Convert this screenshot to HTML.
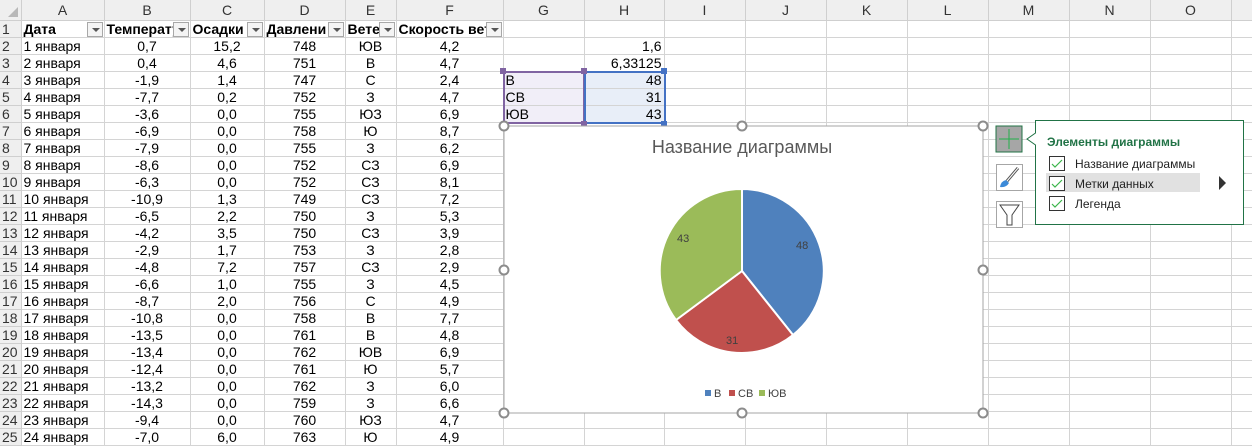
<!DOCTYPE html>
<html><head><meta charset="utf-8"><style>
*{margin:0;padding:0;box-sizing:border-box}
body{width:1252px;height:437px;overflow:hidden;background:#fff;font-family:"Liberation Sans",Arial,sans-serif;font-size:14px;color:#000;position:relative}
table{border-collapse:collapse;table-layout:fixed;position:absolute;left:0;top:0;width:1252px}
td{height:17px;border-right:1px solid #d4d4d4;border-bottom:1px solid #d4d4d4;padding:0 2px;white-space:nowrap;overflow:hidden;line-height:16px}
tr.h td{height:20px;background:#efefef;color:#333;text-align:center;border-color:#cfcfcf;font-size:14px}
td.rh{background:#efefef;color:#333;text-align:left;padding-left:2px;border-color:#cfcfcf}
td.c{text-align:center}
td.r{text-align:right}
tr.hd td{font-weight:bold;position:relative}
.dd{position:absolute;right:1px;top:1px;width:16px;height:15px;border:1px solid #a8a8a8;background:#f4f4f4}
.dd:after{content:"";position:absolute;left:4px;top:5px;border-left:4px solid transparent;border-right:4px solid transparent;border-top:4px solid #555}
.abs{position:absolute}
</style></head><body>
<table>
<colgroup><col style="width:21px"><col style="width:83px"><col style="width:86px"><col style="width:74px"><col style="width:81px"><col style="width:51px"><col style="width:107px"><col style="width:81px"><col style="width:80px"><col style="width:81px"><col style="width:81px"><col style="width:81px"><col style="width:81px"><col style="width:81px"><col style="width:81px"><col style="width:81px"><col style="width:21px"></colgroup>
<tr class="h"><td style="background:#efefef"></td><td>A</td><td>B</td><td>C</td><td>D</td><td>E</td><td>F</td><td>G</td><td>H</td><td>I</td><td>J</td><td>K</td><td>L</td><td>M</td><td>N</td><td>O</td><td></td></tr>
<tr class="hd"><td class="rh" style="font-weight:normal">1</td><td>Дата<span class="dd"></span></td><td>Температу<span class="dd"></span></td><td class="r" style="padding-right:20px">Осадки<span class="dd"></span></td><td>Давлени<span class="dd"></span></td><td class="r" style="padding-right:18px">Ветер<span class="dd"></span></td><td>Скорость вет<span class="dd"></span></td><td></td><td></td><td></td><td></td><td></td><td></td><td></td><td></td><td></td><td></td></tr>
<tr><td class="rh">2</td><td>1 января</td><td class="c">0,7</td><td class="c">15,2</td><td class="c">748</td><td class="c">ЮВ</td><td class="c">4,2</td><td></td><td class="r">1,6</td><td></td><td></td><td></td><td></td><td></td><td></td><td></td><td></td></tr>
<tr><td class="rh">3</td><td>2 января</td><td class="c">0,4</td><td class="c">4,6</td><td class="c">751</td><td class="c">В</td><td class="c">4,7</td><td></td><td class="r">6,33125</td><td></td><td></td><td></td><td></td><td></td><td></td><td></td><td></td></tr>
<tr><td class="rh">4</td><td>3 января</td><td class="c">-1,9</td><td class="c">1,4</td><td class="c">747</td><td class="c">С</td><td class="c">2,4</td><td style="background:#f1eef8">В</td><td class="r" style="background:#e8eef8">48</td><td></td><td></td><td></td><td></td><td></td><td></td><td></td><td></td></tr>
<tr><td class="rh">5</td><td>4 января</td><td class="c">-7,7</td><td class="c">0,2</td><td class="c">752</td><td class="c">З</td><td class="c">4,7</td><td style="background:#f1eef8">СВ</td><td class="r" style="background:#e8eef8">31</td><td></td><td></td><td></td><td></td><td></td><td></td><td></td><td></td></tr>
<tr><td class="rh">6</td><td>5 января</td><td class="c">-3,6</td><td class="c">0,0</td><td class="c">755</td><td class="c">ЮЗ</td><td class="c">6,9</td><td style="background:#f1eef8">ЮВ</td><td class="r" style="background:#e8eef8">43</td><td></td><td></td><td></td><td></td><td></td><td></td><td></td><td></td></tr>
<tr><td class="rh">7</td><td>6 января</td><td class="c">-6,9</td><td class="c">0,0</td><td class="c">758</td><td class="c">Ю</td><td class="c">8,7</td><td></td><td></td><td></td><td></td><td></td><td></td><td></td><td></td><td></td><td></td></tr>
<tr><td class="rh">8</td><td>7 января</td><td class="c">-7,9</td><td class="c">0,0</td><td class="c">755</td><td class="c">З</td><td class="c">6,2</td><td></td><td></td><td></td><td></td><td></td><td></td><td></td><td></td><td></td><td></td></tr>
<tr><td class="rh">9</td><td>8 января</td><td class="c">-8,6</td><td class="c">0,0</td><td class="c">752</td><td class="c">СЗ</td><td class="c">6,9</td><td></td><td></td><td></td><td></td><td></td><td></td><td></td><td></td><td></td><td></td></tr>
<tr><td class="rh">10</td><td>9 января</td><td class="c">-6,3</td><td class="c">0,0</td><td class="c">752</td><td class="c">СЗ</td><td class="c">8,1</td><td></td><td></td><td></td><td></td><td></td><td></td><td></td><td></td><td></td><td></td></tr>
<tr><td class="rh">11</td><td>10 января</td><td class="c">-10,9</td><td class="c">1,3</td><td class="c">749</td><td class="c">СЗ</td><td class="c">7,2</td><td></td><td></td><td></td><td></td><td></td><td></td><td></td><td></td><td></td><td></td></tr>
<tr><td class="rh">12</td><td>11 января</td><td class="c">-6,5</td><td class="c">2,2</td><td class="c">750</td><td class="c">З</td><td class="c">5,3</td><td></td><td></td><td></td><td></td><td></td><td></td><td></td><td></td><td></td><td></td></tr>
<tr><td class="rh">13</td><td>12 января</td><td class="c">-4,2</td><td class="c">3,5</td><td class="c">750</td><td class="c">СЗ</td><td class="c">3,9</td><td></td><td></td><td></td><td></td><td></td><td></td><td></td><td></td><td></td><td></td></tr>
<tr><td class="rh">14</td><td>13 января</td><td class="c">-2,9</td><td class="c">1,7</td><td class="c">753</td><td class="c">З</td><td class="c">2,8</td><td></td><td></td><td></td><td></td><td></td><td></td><td></td><td></td><td></td><td></td></tr>
<tr><td class="rh">15</td><td>14 января</td><td class="c">-4,8</td><td class="c">7,2</td><td class="c">757</td><td class="c">СЗ</td><td class="c">2,9</td><td></td><td></td><td></td><td></td><td></td><td></td><td></td><td></td><td></td><td></td></tr>
<tr><td class="rh">16</td><td>15 января</td><td class="c">-6,6</td><td class="c">1,0</td><td class="c">755</td><td class="c">З</td><td class="c">4,5</td><td></td><td></td><td></td><td></td><td></td><td></td><td></td><td></td><td></td><td></td></tr>
<tr><td class="rh">17</td><td>16 января</td><td class="c">-8,7</td><td class="c">2,0</td><td class="c">756</td><td class="c">С</td><td class="c">4,9</td><td></td><td></td><td></td><td></td><td></td><td></td><td></td><td></td><td></td><td></td></tr>
<tr><td class="rh">18</td><td>17 января</td><td class="c">-10,8</td><td class="c">0,0</td><td class="c">758</td><td class="c">В</td><td class="c">7,7</td><td></td><td></td><td></td><td></td><td></td><td></td><td></td><td></td><td></td><td></td></tr>
<tr><td class="rh">19</td><td>18 января</td><td class="c">-13,5</td><td class="c">0,0</td><td class="c">761</td><td class="c">В</td><td class="c">4,8</td><td></td><td></td><td></td><td></td><td></td><td></td><td></td><td></td><td></td><td></td></tr>
<tr><td class="rh">20</td><td>19 января</td><td class="c">-13,4</td><td class="c">0,0</td><td class="c">762</td><td class="c">ЮВ</td><td class="c">6,9</td><td></td><td></td><td></td><td></td><td></td><td></td><td></td><td></td><td></td><td></td></tr>
<tr><td class="rh">21</td><td>20 января</td><td class="c">-12,4</td><td class="c">0,0</td><td class="c">761</td><td class="c">Ю</td><td class="c">5,7</td><td></td><td></td><td></td><td></td><td></td><td></td><td></td><td></td><td></td><td></td></tr>
<tr><td class="rh">22</td><td>21 января</td><td class="c">-13,2</td><td class="c">0,0</td><td class="c">762</td><td class="c">З</td><td class="c">6,0</td><td></td><td></td><td></td><td></td><td></td><td></td><td></td><td></td><td></td><td></td></tr>
<tr><td class="rh">23</td><td>22 января</td><td class="c">-14,3</td><td class="c">0,0</td><td class="c">759</td><td class="c">З</td><td class="c">6,6</td><td></td><td></td><td></td><td></td><td></td><td></td><td></td><td></td><td></td><td></td></tr>
<tr><td class="rh">24</td><td>23 января</td><td class="c">-9,4</td><td class="c">0,0</td><td class="c">760</td><td class="c">ЮЗ</td><td class="c">4,7</td><td></td><td></td><td></td><td></td><td></td><td></td><td></td><td></td><td></td><td></td></tr>
<tr><td class="rh">25</td><td>24 января</td><td class="c">-7,0</td><td class="c">6,0</td><td class="c">763</td><td class="c">Ю</td><td class="c">4,9</td><td></td><td></td><td></td><td></td><td></td><td></td><td></td><td></td><td></td><td></td></tr>
</table>
<div class="abs" style="left:8px;top:7px;border-left:10px solid transparent;border-bottom:10px solid #b8b8b8"></div>
<div class="abs" style="left:503px;top:71px;width:82px;height:53px;border:2px solid #8064a2"></div>
<div class="abs" style="left:584px;top:71px;width:82px;height:53px;border:2px solid #4472c4"></div>
<div class="abs" style="left:500px;top:68px;width:6px;height:6px;background:#8064a2"></div>
<div class="abs" style="left:581px;top:68px;width:6px;height:6px;background:#8064a2"></div>
<div class="abs" style="left:581px;top:121px;width:6px;height:6px;background:#8064a2"></div>
<div class="abs" style="left:661px;top:68px;width:6px;height:6px;background:#4472c4"></div>
<div class="abs" style="left:661px;top:121px;width:6px;height:6px;background:#4472c4"></div>
<svg class="abs" style="left:0;top:0" width="1252" height="437">
<rect x="504" y="126" width="479" height="287" fill="#fff" stroke="#a6a6a6" stroke-width="1"/>
<text x="742" y="153" text-anchor="middle" font-family="Liberation Sans,sans-serif" font-size="18" fill="#595959">Название диаграммы</text>
<path d="M742,271 L742,189 A82,82 0 0 1 793,335 Z" fill="#4f81bd" stroke="#fff" stroke-width="2"/>
<path d="M742,271 L793,335 A82,82 0 0 1 676,320 Z" fill="#c0504d" stroke="#fff" stroke-width="2"/>
<path d="M742,271 L676,320 A82,82 0 0 1 742,189 Z" fill="#9bbb59" stroke="#fff" stroke-width="2"/>
<g font-family="Liberation Sans,sans-serif" font-size="11" fill="#404040">
<text x="796" y="249">48</text><text x="726" y="344">31</text><text x="677" y="242">43</text>
<rect x="705" y="390" width="6" height="6" fill="#4f81bd"/><text x="714" y="397">В</text>
<rect x="729" y="390" width="6" height="6" fill="#c0504d"/><text x="738" y="397">СВ</text>
<rect x="759" y="390" width="6" height="6" fill="#9bbb59"/><text x="768" y="397">ЮВ</text>
</g>
<g fill="#fff" stroke="#8c8c8c" stroke-width="2">
<circle cx="504" cy="126" r="4.5"/><circle cx="742" cy="126" r="4.5"/><circle cx="983" cy="126" r="4.5"/>
<circle cx="504" cy="270" r="4.5"/><circle cx="983" cy="270" r="4.5"/>
<circle cx="504" cy="413" r="4.5"/><circle cx="742" cy="413" r="4.5"/><circle cx="983" cy="413" r="4.5"/>
</g>
<rect x="996" y="126" width="26" height="26" fill="#a6a6a6" stroke="#217346"/>
<path d="M1009,129 V149 M999,139 H1019" stroke="#22b04b" stroke-width="1"/>
<rect x="996.5" y="164.5" width="26" height="26" fill="#fff" stroke="#a6a6a6"/>
<path d="M1018,168 L1007,181" stroke="#555" stroke-width="3"/>
<path d="M1018,168 L1007,181" stroke="#fff" stroke-width="1"/>
<path d="M1006,180 Q1001,181 1000,187 Q1006,188 1009,183 Z" fill="#3c8ad8"/>
<rect x="996.5" y="201.5" width="26" height="26" fill="#fff" stroke="#a6a6a6"/>
<path d="M1000,205 H1019 L1012,215 V225 H1007 V215 Z" fill="#fff" stroke="#444"/>
<path d="M1035.5,120.5 H1243.5 V224.5 H1035.5 V145 L1027,139 L1035.5,133 Z" fill="#fff" stroke="#217346"/>
<rect x="1046" y="173" width="154" height="19" fill="#e1e1e1"/>
<text x="1047" y="146" font-family="Liberation Sans,sans-serif" font-size="12" font-weight="bold" fill="#217346">Элементы диаграммы</text>
<g fill="#fff" stroke="#333"><rect x="1049.5" y="156.5" width="15" height="14"/><rect x="1049.5" y="176.5" width="15" height="14"/><rect x="1049.5" y="196.5" width="15" height="14"/></g>
<g fill="none" stroke="#3bb54a" stroke-width="1.2"><path d="M1052,164 L1055,167 L1062,160"/><path d="M1052,184 L1055,187 L1062,180"/><path d="M1052,204 L1055,207 L1062,200"/></g>
<g font-family="Liberation Sans,sans-serif" font-size="12" fill="#222"><text x="1075" y="168">Название диаграммы</text><text x="1075" y="188">Метки данных</text><text x="1075" y="208">Легенда</text></g>
<path d="M1219,176 L1226,183 L1219,190 Z" fill="#333"/>
</svg>
</body></html>
